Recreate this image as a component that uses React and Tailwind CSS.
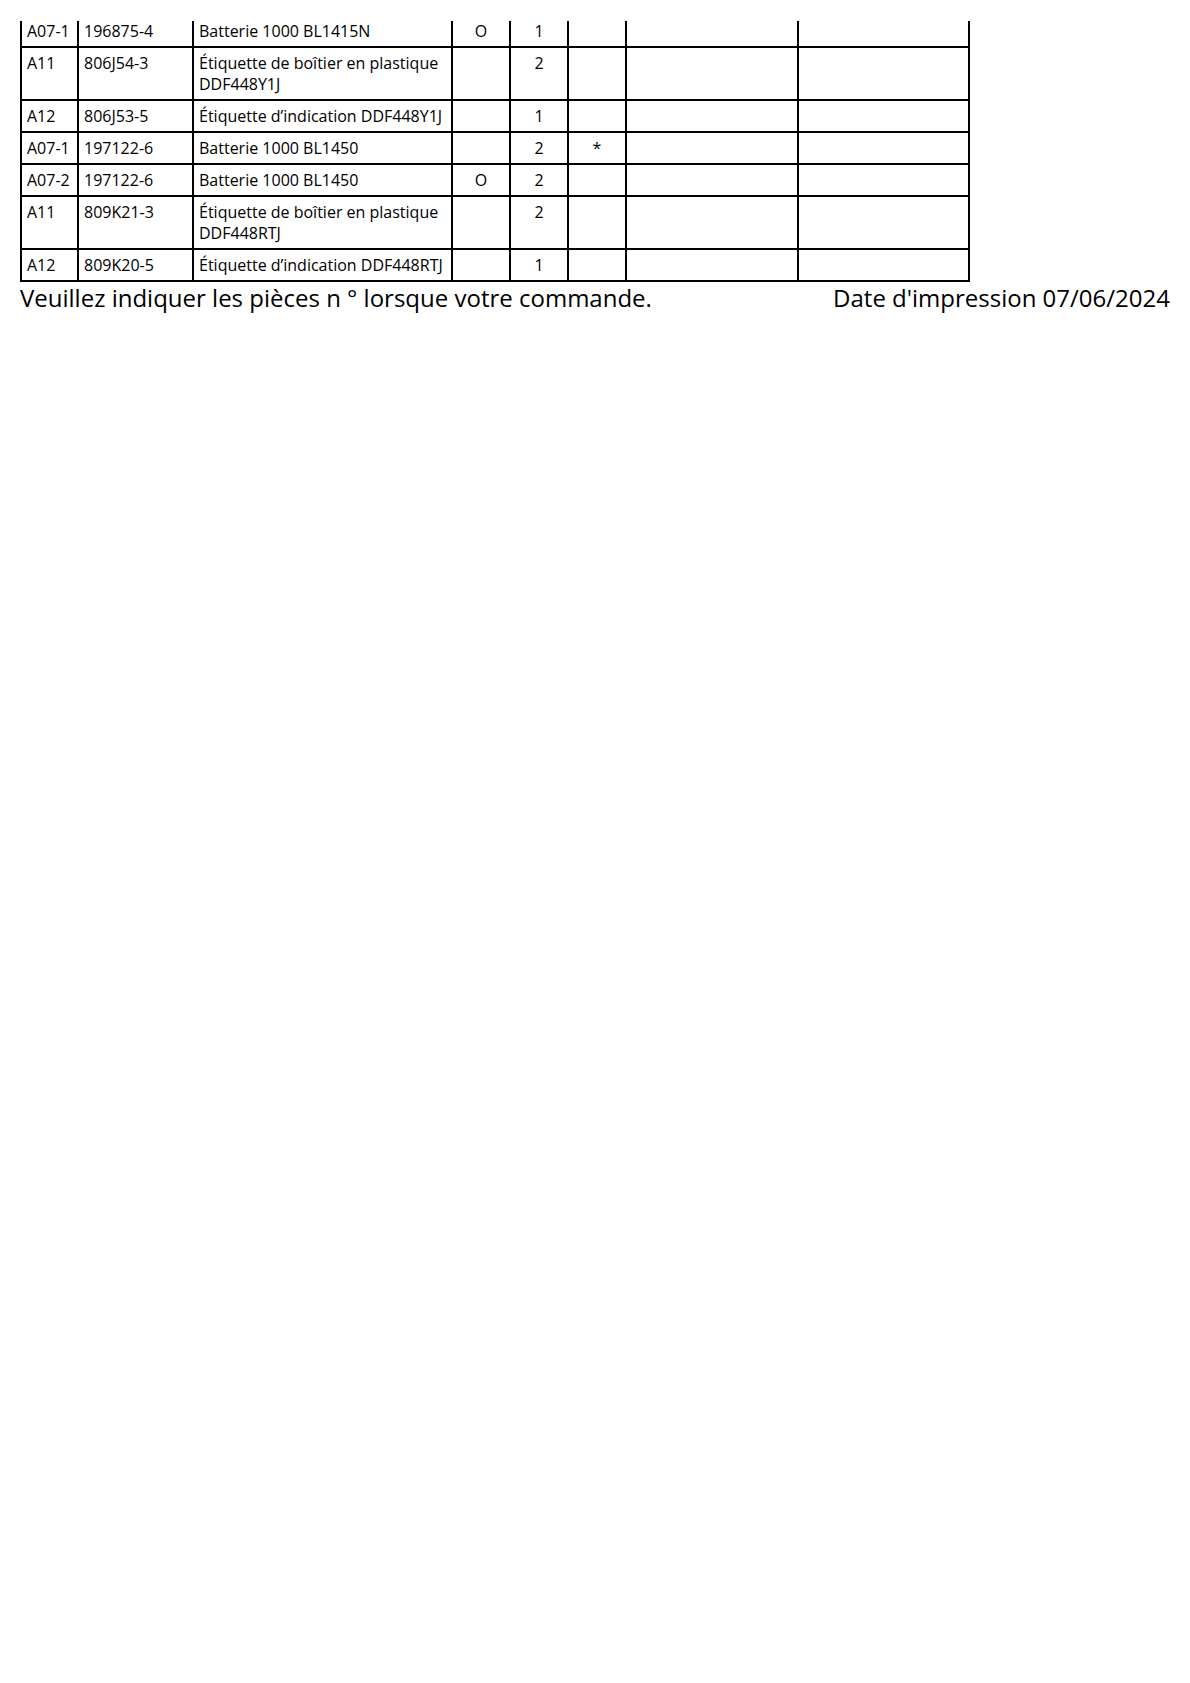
const rows = [
  { ref: 'A07-1', no: '196875-4', desc: ['Batterie 1000 BL1415N'], o: 'O', qty: '1', star: '', first: true },
  { ref: 'A11', no: '806J54-3', desc: ['Étiquette de boîtier en plastique', 'DDF448Y1J'], o: '', qty: '2', star: '' },
  { ref: 'A12', no: '806J53-5', desc: ['Étiquette d’indication DDF448Y1J'], o: '', qty: '1', star: '' },
  { ref: 'A07-1', no: '197122-6', desc: ['Batterie 1000 BL1450'], o: '', qty: '2', star: '*' },
  { ref: 'A07-2', no: '197122-6', desc: ['Batterie 1000 BL1450'], o: 'O', qty: '2', star: '' },
  { ref: 'A11', no: '809K21-3', desc: ['Étiquette de boîtier en plastique', 'DDF448RTJ'], o: '', qty: '2', star: '' },
  { ref: 'A12', no: '809K20-5', desc: ['Étiquette d’indication DDF448RTJ'], o: '', qty: '1', star: '' },
]

export default function App() {
  return (
    <div className="bg-white w-[1190px] h-[1683px] pt-[21px] pl-[20px] text-black" style={{ fontFamily: '"Open Sans", "Noto Sans", sans-serif' }}>
      <table className="border-collapse text-[16px] leading-[21px] table-fixed w-[948px]">
        <colgroup>
          <col className="w-[57px]" />
          <col className="w-[115px]" />
          <col className="w-[259px]" />
          <col className="w-[58px]" />
          <col className="w-[58px]" />
          <col className="w-[58px]" />
          <col className="w-[172px]" />
          <col className="w-[171px]" />
        </colgroup>
        <tbody>
          {rows.map((r, i) => {
            const cell = `border-2 border-black align-top px-[5px] ${r.first ? 'border-t-0 pt-0 pb-[4px]' : 'pt-[5px] pb-[4px]'}`
            return (
              <tr key={i}>
                <td className={cell}>{r.ref}</td>
                <td className={cell}>{r.no}</td>
                <td className={cell}>
                  {r.desc.map((d, j) => (
                    <div key={j} className="whitespace-nowrap">{d}</div>
                  ))}
                </td>
                <td className={`${cell} text-center`}>{r.o}</td>
                <td className={`${cell} text-center`}>{r.qty}</td>
                <td className={`${cell} text-center`}>{r.star}</td>
                <td className={cell}></td>
                <td className={cell}></td>
              </tr>
            )
          })}
        </tbody>
      </table>
      <div className="flex justify-between w-[1150px] text-[24px] leading-[32px]">
        <span>Veuillez indiquer les pièces n ° lorsque votre commande.</span>
        <span>Date d'impression 07/06/2024</span>
      </div>
    </div>
  )
}
